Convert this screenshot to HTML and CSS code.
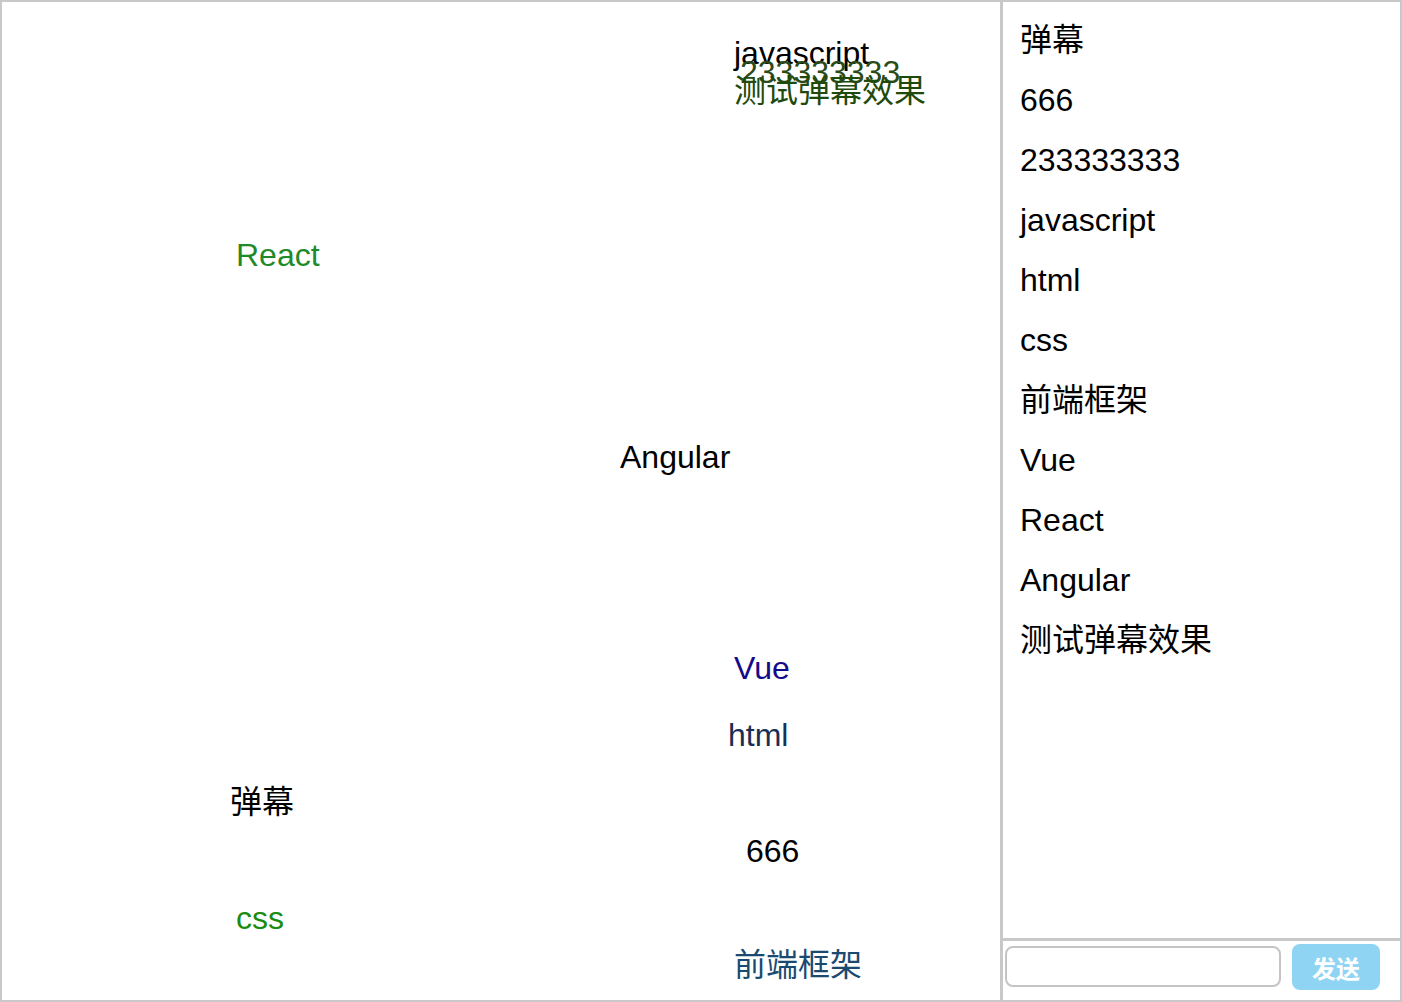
FILE: index.html
```html
<!DOCTYPE html>
<html lang="zh">
<head>
<meta charset="utf-8">
<title>弹幕</title>
<link rel="stylesheet" href="styles.css">
</head>
<body>
<div class="app">
  <div class="stage">
    <span class="dm c-black" style="left:732px;top:31px">javascript</span>
    <span class="dm c-olive" style="left:738px;top:50px">233333333</span>
    <span class="dm c-dgreen" style="left:732px;top:69px">测试弹幕效果</span>
    <span class="dm c-green" style="left:234px;top:233px">React</span>
    <span class="dm c-black" style="left:618px;top:435px">Angular</span>
    <span class="dm c-navy" style="left:732px;top:646px">Vue</span>
    <span class="dm c-slate" style="left:726px;top:713px">html</span>
    <span class="dm c-black" style="left:228px;top:780px">弹幕</span>
    <span class="dm c-black" style="left:744px;top:829px">666</span>
    <span class="dm c-lgreen" style="left:234px;top:896px">css</span>
    <span class="dm c-steel" style="left:732px;top:943px">前端框架</span>
  </div>
  <div class="side">
    <ul class="list">
      <li>弹幕</li>
      <li>666</li>
      <li>233333333</li>
      <li>javascript</li>
      <li>html</li>
      <li>css</li>
      <li>前端框架</li>
      <li>Vue</li>
      <li>React</li>
      <li>Angular</li>
      <li>测试弹幕效果</li>
    </ul>
    <div class="bar">
      <input class="input" type="text">
      <button class="send">发送</button>
    </div>
  </div>
</div>
</body>
</html>
```
FILE: styles.css
```css
html, body {
  margin: 0;
  padding: 0;
  background: #fff;
}
body {
  font-family: "Liberation Sans", "Noto Sans CJK SC", sans-serif;
  color: #000;
}
.app {
  box-sizing: border-box;
  width: 1402px;
  height: 1002px;
  border: 2px solid #c8c8c8;
  display: flex;
}
.stage {
  position: relative;
  width: 998px;
  height: 100%;
  overflow: hidden;
  border-right: 3px solid #c8c8c8;
}
.dm {
  position: absolute;
  white-space: nowrap;
  font-size: 32px;
  line-height: 40px;
}
.c-black { color: #000; }
.c-olive { color: #2a4a18; }
.c-dgreen { color: #1e4a0c; }
.c-green { color: #1f8a2a; }
.c-navy { color: #140a8a; }
.c-slate { color: #1a2f55; }
.c-lgreen { color: #1a8c10; }
.c-steel { color: #1a4a70; }
.side {
  flex: 1;
  display: flex;
  flex-direction: column;
  min-width: 0;
}
.list {
  flex: 1;
  list-style: none;
  margin: 0;
  padding: 8px 0 0 17px;
  font-size: 32px;
}
.list li {
  height: 60px;
  line-height: 60px;
  white-space: nowrap;
}
.bar {
  height: 59px;
  border-top: 3px solid #c8c8c8;
  display: flex;
  align-items: flex-start;
  gap: 11px;
  padding-left: 2px;
}
.input {
  box-sizing: border-box;
  margin-top: 5px;
  width: 276px;
  height: 41px;
  border: 2px solid #c4c4c4;
  border-radius: 8px;
  background: #fff;
  outline: none;
  padding: 0 8px;
  font-size: 18px;
}
.send {
  margin-top: 3px;
  width: 88px;
  height: 46px;
  border: none;
  border-radius: 8px;
  background: #8fd4f3;
  color: #fff;
  font-family: "Noto Sans CJK SC", sans-serif;
  font-weight: bold;
  font-size: 24px;
  padding: 0;
}
```
